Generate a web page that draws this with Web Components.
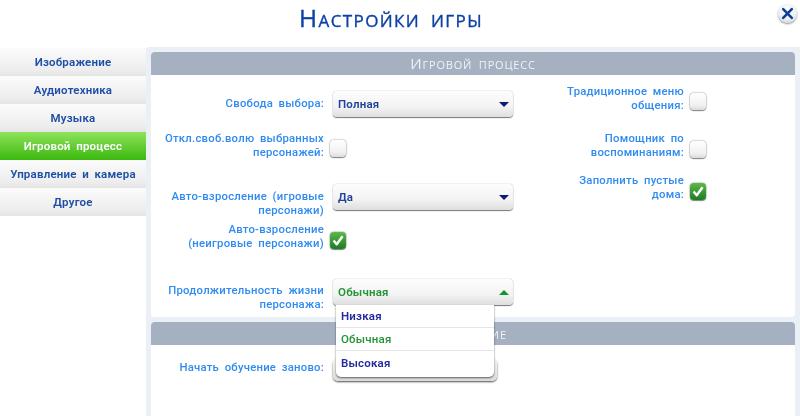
<!DOCTYPE html>
<html lang="ru">
<head>
<meta charset="utf-8">
<title>Настройки игры</title>
<style>
  html, body { margin: 0; height: 100%; background: #fff; overflow: hidden; }
  body { font-family: Roboto, "Noto Sans", sans-serif; }
</style>
</head>
<body>
<game-settings>
  <nav-item>Изображение</nav-item>
  <nav-item>Аудиотехника</nav-item>
  <nav-item>Музыка</nav-item>
  <nav-item active>Игровой процесс</nav-item>
  <nav-item>Управление и камера</nav-item>
  <nav-item>Другое</nav-item>

  <settings-panel slot="panels" heading="Игровой процесс" class="first">
    <div slot="left">
      <setting-row label="Свобода выбора:" h="26" lt="6"><drop-down value="Полная"></drop-down></setting-row>
      <setting-row label="Откл.своб.волю выбранных персонажей:" h="30" gap="15" ct="8"><check-box></check-box></setting-row>
      <setting-row label="Авто-взросление (игровые персонажи)" h="26" gap="22" lt="6"><drop-down value="Да"></drop-down></setting-row>
      <setting-row label="Авто-взросление (неигровые персонажи)" h="28" gap="13" ct="9"><check-box checked></check-box></setting-row>
      <setting-row label="Продолжительность жизни персонажа:" h="26" gap="28" lt="5"><drop-down value="Обычная" open></drop-down></setting-row>
    </div>
    <div slot="right">
      <setting-row label="Традиционное меню общения:" h="30" ct="8" side="right"><check-box></check-box></setting-row>
      <setting-row label="Помощник по воспоминаниям:" h="30" gap="17" ct="9" side="right"><check-box></check-box></setting-row>
      <setting-row label="Заполнить пустые дома:" h="30" gap="12" ct="9" side="right"><check-box checked></check-box></setting-row>
    </div>
  </settings-panel>

  <settings-panel slot="panels" heading="Обучение" class="second">
    <div slot="left">
      <setting-row label="Начать обучение заново:" h="22" lt="2"><plain-button></plain-button></setting-row>
    </div>
  </settings-panel>
</game-settings>

<script>
class GameSettings extends HTMLElement {
  connectedCallback() {
    this.attachShadow({ mode: 'open' });
    this.shadowRoot.innerHTML = `
      <style>
        :host { display: block; width: 800px; height: 416px; position: relative; overflow: hidden; filter: blur(.45px); }
        header { height: 47px; display: flex; justify-content: center; padding-right: 18px; box-sizing: border-box; }
        h1 {
          margin: 0; font: 400 24.5px/36px "Open Sans", "Noto Sans", sans-serif;
          font-variant: small-caps; color: #0b41a4; letter-spacing: 1.4px; word-spacing: 3px;
          -webkit-text-stroke: .35px #0b41a4;
        }
        .close {
          position: absolute; left: 778px; top: 4px; width: 19px; height: 19px; border-radius: 50%;
          background: radial-gradient(circle at 50% 35%, #fff 0, #eef0f4 55%, #b9bdc4 100%);
          box-shadow: 0 1px 2px rgba(0,0,0,.45);
        }
        .close svg { display: block; }
        .body { display: flex; height: 369px; }
        .nav { width: 146px; padding-top: 1px; box-sizing: border-box; display: flex; flex-direction: column; flex: none; }
        .main { flex: 1; background: #ebeff6; padding: 5px 5px 0; display: flex; flex-direction: column; gap: 5px; border-radius: 3px 0 0 0; }
      </style>
      <header><h1>Настройки игры</h1></header>
      <div class="close">
        <svg width="19" height="19" viewBox="0 0 19 19"><path d="M5.2 5.2 13.8 13.8M13.8 5.2 5.2 13.8" stroke="#0d3f96" stroke-width="2.6" stroke-linecap="round" fill="none"/></svg>
      </div>
      <div class="body">
        <div class="nav"><slot></slot></div>
        <div class="main"><slot name="panels"></slot></div>
      </div>`;
  }
}

class NavItem extends HTMLElement {
  connectedCallback() {
    this.attachShadow({ mode: 'open' });
    this.shadowRoot.innerHTML = `
      <style>
        :host {
          display: flex; height: 28px; align-items: center; justify-content: center; box-sizing: border-box;
          background: linear-gradient(#fbfbfb, #ededed 80%, #e4e4e4);
          color: #1d4da6; font: 600 11.5px Roboto, sans-serif; letter-spacing: .2px; word-spacing: 2.5px;
        }
        :host([active]) { background: linear-gradient(#8ee35a, #3cb80f); color: #fff; }
      </style>
      <slot></slot>`;
  }
}

class SettingsPanel extends HTMLElement {
  connectedCallback() {
    this.attachShadow({ mode: 'open' });
    this.shadowRoot.innerHTML = `
      <style>
        :host { display: block; background: #fff; border-radius: 4px; }
        :host(.first) { height: 265px; }
        :host(.second) { height: 94px; border-radius: 4px 4px 0 0; }
        h2 {
          margin: 0; height: 23px; background: #a5b0c0; border-radius: 4px 4px 0 0; color: #f1f3f6;
          font: 400 15px/23px "Open Sans", "Noto Sans", sans-serif; font-variant: small-caps;
          text-align: center; letter-spacing: .8px; word-spacing: 2px;
        }
        .cols { display: flex; }
        .col-l { width: 372px; flex: none; padding-top: 16px; }
        .col-r { width: 272px; flex: none; padding-top: 10px; }
        :host(.second) .col-l { padding-top: 14px; }
      </style>
      <h2>${this.getAttribute('heading')}</h2>
      <div class="cols">
        <div class="col-l"><slot name="left"></slot></div>
        <div class="col-r"><slot name="right"></slot></div>
      </div>`;
  }
}

class SettingRow extends HTMLElement {
  connectedCallback() {
    const right = this.getAttribute('side') === 'right';
    const lt = this.getAttribute('lt') || 0;
    const ct = this.getAttribute('ct') || 0;
    this.attachShadow({ mode: 'open' });
    this.shadowRoot.innerHTML = `
      <style>
        :host {
          display: grid; grid-template-columns: ${right ? '121px 1fr' : '160px 1fr'}; column-gap: ${right ? '6px' : '9px'};
          align-items: start; height: ${this.getAttribute('h')}px; margin-top: ${this.getAttribute('gap') || 0}px;
          padding-left: ${right ? 40 : 13}px;
        }
        .label {
          margin-top: ${lt}px; text-align: right; color: #2f8bf0; font: 500 11.3px/14px Roboto, sans-serif;
          letter-spacing: .25px; word-spacing: 2.5px;
        }
        ::slotted(*) { margin-top: ${ct}px; }
        ::slotted(check-box) { margin-left: ${right ? 0 : -3}px; }
      </style>
      <div class="label">${this.getAttribute('label')}</div>
      <slot></slot>`;
  }
}

class DropDown extends HTMLElement {
  connectedCallback() {
    const open = this.hasAttribute('open');
    const val = this.getAttribute('value');
    const opts = ['Низкая', 'Обычная', 'Высокая'];
    this.attachShadow({ mode: 'open' });
    this.shadowRoot.innerHTML = `
      <style>
        :host { display: block; position: relative; width: 180px; height: 26px; }
        .box {
          height: 26px; box-sizing: border-box; border-radius: 4px; padding: 0 4px 0 5px;
          display: flex; align-items: center; justify-content: space-between;
          background: linear-gradient(#fdfdfd, #f3f3f3 60%, #dedede);
          box-shadow: 0 0 1px rgba(0,0,0,.55), 0 1px 1px rgba(0,0,0,.5);
          color: #20429a; font: 600 11.5px Roboto, sans-serif; letter-spacing: .2px;
        }
        :host([open]) .box { color: #229434; }
        .arrow { width: 0; height: 0; border: 5.5px solid transparent; border-top: 5.5px solid #0c1a78; border-bottom: 0; }
        :host([open]) .arrow { border-top: 0; border-bottom: 5.5px solid #119a2c; }
        .menu {
          position: absolute; left: 3px; top: 26px; width: 158px; box-sizing: border-box; padding-bottom: 3px;
          background: #fff; z-index: 5; border-radius: 0 0 5px 5px; box-shadow: 0 1px 2px rgba(0,0,0,.6);
          display: flex; flex-direction: column;
        }
        .opt {
          height: 23px; box-sizing: border-box; display: flex; align-items: center; padding-left: 5px;
          color: #26289f; font: 600 11.5px Roboto, sans-serif; letter-spacing: .2px;
          border-bottom: 1px solid #e6e6e6;
        }
        .opt:last-child { border-bottom: 0; }
        .opt.sel { color: #229434; font-weight: 500; }
      </style>
      <div class="box"><span>${val}</span><span class="arrow"></span></div>
      ${open ? `<div class="menu">${opts.map(o => `<div class="opt${o === val ? ' sel' : ''}">${o}</div>`).join('')}</div>` : ''}`;
  }
}

class CheckBox extends HTMLElement {
  connectedCallback() {
    this.attachShadow({ mode: 'open' });
    this.shadowRoot.innerHTML = `
      <style>
        :host {
          display: block; width: 16px; height: 17px; border-radius: 4px;
          background: linear-gradient(#fff, #f1f1f1 70%, #dcdcdc);
          box-shadow: 0 0 1.5px rgba(0,0,0,.75), 0 1px 1px rgba(0,0,0,.4);
        }
        :host([checked]) { background: linear-gradient(#5cb84a, #1c7d22); }
        svg { display: block; }
      </style>
      ${this.hasAttribute('checked') ? '<svg width="16" height="17" viewBox="0 0 16 17"><path d="M3.6 8.6 6.7 12.3 12.6 4.2" fill="none" stroke="#fff" stroke-width="2.4" stroke-linejoin="round"/></svg>' : ''}`;
  }
}

class PlainButton extends HTMLElement {
  connectedCallback() {
    this.attachShadow({ mode: 'open' });
    this.shadowRoot.innerHTML = `
      <style>
        :host {
          display: block; width: 164px; height: 22px; border-radius: 5px;
          background: linear-gradient(#f5f5f5, #dcdcdc);
          box-shadow: 0 1px 2px rgba(0,0,0,.7);
        }
      </style>`;
  }
}

customElements.define('game-settings', GameSettings);
customElements.define('nav-item', NavItem);
customElements.define('settings-panel', SettingsPanel);
customElements.define('setting-row', SettingRow);
customElements.define('drop-down', DropDown);
customElements.define('check-box', CheckBox);
customElements.define('plain-button', PlainButton);
</script>
</body>
</html>
